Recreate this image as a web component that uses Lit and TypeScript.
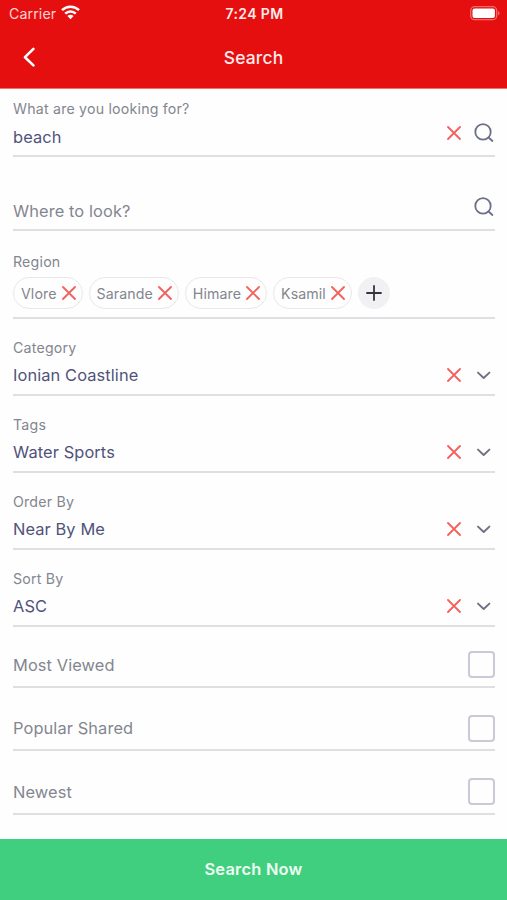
import { LitElement, html, css } from "lit";
import { customElement, property } from "lit/decorators.js";

const cross = (size: number) => html`<svg class="cross" width=${size} height=${size} viewBox="0 0 14 14">
  <path d="M1 1 L13 13 M13 1 L1 13" fill="none" stroke="#f4605c" stroke-width="1.8" stroke-linecap="round" />
</svg>`;

const magnifier = html`<svg class="tool" width="20" height="20" viewBox="0 0 20 20">
  <g fill="none" stroke="#6c6f88" stroke-width="1.8" stroke-linecap="round">
    <circle cx="9" cy="8.9" r="7.7" />
    <path d="M14.6 14.5 L18.4 18" />
  </g>
</svg>`;

const chevron = html`<svg class="tool" width="20" height="20" viewBox="0 0 20 20">
  <path d="M4 7.6 L9.7 13 L15.4 7.6" fill="none" stroke="#6d7082" stroke-width="1.9" stroke-linecap="round" stroke-linejoin="round" />
</svg>`;

@customElement("search-field")
class SearchField extends LitElement {
  @property() label = "";
  @property() value = "";
  @property() placeholder = "";
  @property() kind = "select";

  static styles = css`
    :host {
      display: flex;
      flex-direction: column;
      justify-content: flex-end;
      box-sizing: border-box;
      height: 77px;
      border-bottom: 2px solid #dfdfe2;
    }
    .label {
      font-size: 14.2px;
      line-height: 18px;
      letter-spacing: 0.2px;
      color: #83868f;
    }
    .row {
      display: flex;
      align-items: center;
      height: 37px;
    }
    .row.select {
      box-sizing: border-box;
      padding-bottom: 2px;
    }
    .text {
      flex: 1;
      font-size: 16.4px;
      line-height: 20px;
      letter-spacing: 0.1px;
      color: #50527a;
    }
    .text.hint {
      color: #83868f;
    }
    .tools {
      display: flex;
      align-items: center;
      gap: 13px;
    }
    .tools.raised {
      padding-bottom: 7px;
    }
    .cross,
    .tool {
      display: block;
    }
    .tool {
      margin-right: 1px;
    }
  `;

  render() {
    const search = this.kind === "search";
    return html`
      ${this.label ? html`<div class="label">${this.label}</div>` : null}
      <div class="row ${search ? "" : "select"}">
        <div class="text ${this.value ? "" : "hint"}">${this.value || this.placeholder}</div>
        <div class="tools ${search ? "raised" : ""}">
          ${this.value ? cross(14) : null} ${search ? magnifier : chevron}
        </div>
      </div>
    `;
  }
}

@customElement("app-root")
class AppRoot extends LitElement {
  regions = ["Vlore", "Sarande", "Himare", "Ksamil"];
  toggles = ["Most Viewed", "Popular Shared", "Newest"];

  static styles = css`
    :host {
      display: flex;
      flex-direction: column;
      width: 507px;
      height: 900px;
      overflow: hidden;
      background: #fefefe;
      font-family: Inter, "Liberation Sans", sans-serif;
    }
    .top {
      background: #e60f10;
      color: #fff;
      height: 88px;
      border-bottom: 1px solid #f0706a;
      flex: none;
    }
    .status {
      display: grid;
      grid-template-columns: 1fr auto 1fr;
      align-items: center;
      height: 27px;
      padding: 0 7px 0 9px;
    }
    .carrier {
      display: flex;
      align-items: center;
      gap: 5px;
      font-size: 14.2px;
      letter-spacing: 0.1px;
      color: #fbd5d3;
    }
    .wifi {
      margin-top: -2px;
    }
    .clock {
      font-size: 14px;
      font-weight: 600;
      letter-spacing: 0.35px;
      color: #fdebea;
    }
    .battery {
      justify-self: end;
      display: block;
    }
    .nav {
      display: grid;
      grid-template-columns: 1fr auto 1fr;
      align-items: center;
      height: 60px;
      padding: 0 22px;
    }
    .back {
      display: block;
    }
    .title {
      font-size: 17.4px;
      font-weight: 500;
      letter-spacing: 0.2px;
      color: #fdebea;
    }
    .form {
      flex: 1;
      display: flex;
      flex-direction: column;
      padding: 0 12px 0 13px;
    }
    .keyword {
      height: 68px;
    }
    .place {
      height: 74px;
    }
    .region {
      box-sizing: border-box;
      height: 88px;
      display: flex;
      flex-direction: column;
      justify-content: flex-end;
      border-bottom: 2px solid #dfdfe2;
    }
    .label {
      font-size: 14.2px;
      line-height: 18px;
      letter-spacing: 0.2px;
      color: #83868f;
    }
    .chips {
      display: flex;
      align-items: center;
      gap: 6px;
      padding: 6px 0 8px;
    }
    .chip {
      box-sizing: border-box;
      height: 32px;
      display: flex;
      align-items: center;
      gap: 5px;
      padding: 0 6px 0 7px;
      border: 1.4px solid #e9e9ec;
      border-radius: 16px;
      font-size: 14.2px;
      letter-spacing: 0.08px;
      color: #83868f;
    }
    .add {
      display: flex;
      align-items: center;
      justify-content: center;
      width: 32px;
      height: 32px;
      border-radius: 50%;
      background: #f1f1f3;
    }
    .toggle {
      box-sizing: border-box;
      display: flex;
      align-items: center;
      justify-content: space-between;
      height: 64px;
      padding-top: 19px;
      border-bottom: 2px solid #dfdfe2;
      font-size: 16.4px;
      letter-spacing: 0.1px;
      color: #83868f;
    }
    .toggle:nth-of-type(1) {
      height: 61px;
      padding-top: 16px;
    }
    .toggle:nth-of-type(2) {
      height: 63px;
    }
    .box {
      box-sizing: border-box;
      width: 27px;
      height: 27px;
      border: 2px solid #c9c9d8;
      border-radius: 4px;
    }
    .submit {
      box-sizing: border-box;
      height: 61px;
      flex: none;
      display: flex;
      align-items: center;
      justify-content: center;
      padding-bottom: 2px;
      background: #40cf7f;
      color: #effcf4;
      font-size: 16.4px;
      font-weight: 600;
      letter-spacing: 0.25px;
    }
  `;

  render() {
    return html`
      <div class="top">
        <div class="status">
          <div class="carrier">
            Carrier
            <svg class="wifi" width="19" height="15" viewBox="0 0 19 15">
              <g fill="none" stroke="#fff" stroke-width="2.5">
                <path d="M1 5.2 C5.8 0.6 13.2 0.6 18 5.2" />
                <path d="M4.2 8.6 C7.2 5.7 11.8 5.7 14.8 8.6" />
              </g>
              <path d="M9.5 14.2 L6.4 11 C8.2 9.4 10.8 9.4 12.6 11 Z" fill="#fff" />
            </svg>
          </div>
          <div class="clock">7:24 PM</div>
          <svg class="battery" width="30" height="15" viewBox="0 0 30 15">
            <rect x="0.7" y="0.7" width="26" height="13" rx="4" fill="none" stroke="#ef6d6b" stroke-width="1.3" />
            <rect x="2.5" y="2.5" width="22.4" height="9.4" rx="2" fill="#fff" />
            <path d="M28 5 Q31 7.2 28 9.4 Z" fill="#ef6d6b" />
          </svg>
        </div>
        <div class="nav">
          <svg class="back" width="14" height="20" viewBox="0 0 14 20">
            <path d="M11.4 1.8 L3 10.2 L11.4 18.4" fill="none" stroke="#fff" stroke-width="2.6" stroke-linecap="round" stroke-linejoin="round" />
          </svg>
          <div class="title">Search</div>
        </div>
      </div>
      <div class="form">
        <search-field class="keyword" kind="search" label="What are you looking for?" value="beach"></search-field>
        <search-field class="place" kind="search" placeholder="Where to look?"></search-field>
        <section class="region">
          <div class="label">Region</div>
          <div class="chips">
            ${this.regions.map((name) => html`<span class="chip">${name}${cross(14)}</span>`)}
            <span class="add">
              <svg width="16" height="16" viewBox="0 0 16 16">
                <path d="M8 1 V15 M1 8 H15" stroke="#33343f" stroke-width="1.8" stroke-linecap="round" />
              </svg>
            </span>
          </div>
        </section>
        <search-field label="Category" value="Ionian Coastline"></search-field>
        <search-field label="Tags" value="Water Sports"></search-field>
        <search-field label="Order By" value="Near By Me"></search-field>
        <search-field label="Sort By" value="ASC"></search-field>
        ${this.toggles.map((name) => html`<div class="toggle">${name}<span class="box"></span></div>`)}
      </div>
      <div class="submit">Search Now</div>
    `;
  }
}
